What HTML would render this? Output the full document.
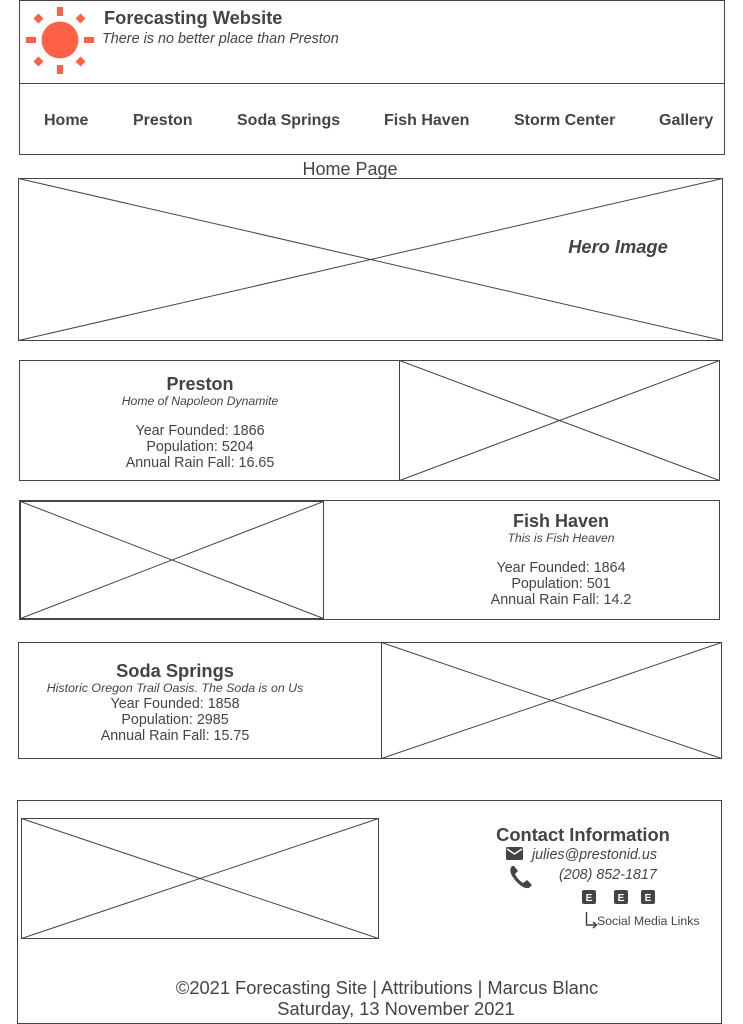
<!DOCTYPE html>
<html><head><meta charset="utf-8"><style>
html,body{margin:0;padding:0;background:#fff;width:743px;height:1024px;overflow:hidden}
svg{display:block}
text{font-family:"Liberation Sans",Arial,sans-serif;fill:#444}
.b{font-weight:bold}
.i{font-style:italic}
</style></head><body>
<svg width="743" height="1024" viewBox="0 0 743 1024" xmlns="http://www.w3.org/2000/svg">
<g fill="none" stroke="#444" stroke-width="1">
<rect x="19.5" y="0.5" width="705" height="154"/>
<line x1="19.5" y1="83.5" x2="724.5" y2="83.5"/>
<rect x="18.5" y="178.5" width="704" height="162"/>
<line x1="18.5" y1="178.5" x2="722.5" y2="340.5"/>
<line x1="18.5" y1="340.5" x2="722.5" y2="178.5"/>
<rect x="19.5" y="360.5" width="700" height="120"/>
<rect x="399.5" y="360.5" width="320" height="120"/>
<line x1="399.5" y1="360.5" x2="719.5" y2="480.5"/>
<line x1="399.5" y1="480.5" x2="719.5" y2="360.5"/>
<rect x="19.5" y="500.5" width="700" height="119"/>
<rect x="20.5" y="501.5" width="303" height="117"/>
<line x1="20.5" y1="501.5" x2="323.5" y2="618.5"/>
<line x1="20.5" y1="618.5" x2="323.5" y2="501.5"/>
<rect x="18.5" y="642.5" width="703" height="116"/>
<rect x="381.5" y="642.5" width="340" height="116"/>
<line x1="381.5" y1="642.5" x2="721.5" y2="758.5"/>
<line x1="381.5" y1="758.5" x2="721.5" y2="642.5"/>
<rect x="17.5" y="800.5" width="704" height="223"/>
<rect x="21.5" y="818.5" width="357" height="120"/>
<line x1="21.5" y1="818.5" x2="378.5" y2="938.5"/>
<line x1="21.5" y1="938.5" x2="378.5" y2="818.5"/>
</g>
<g fill="#fe6146">
<circle cx="60" cy="40" r="18.5"/>
<rect x="57" y="7" width="6" height="9"/>
<rect x="57" y="65" width="6" height="9"/>
<rect x="26" y="37" width="10" height="6"/>
<rect x="84" y="37" width="10" height="6"/>
<rect x="35" y="15" width="7" height="7" transform="rotate(45 38.5 18.5)"/>
<rect x="77" y="15" width="7" height="7" transform="rotate(45 80.5 18.5)"/>
<rect x="35" y="58" width="7" height="7" transform="rotate(45 38.5 61.5)"/>
<rect x="77" y="58" width="7" height="7" transform="rotate(45 80.5 61.5)"/>
</g>
<text x="104" y="24" class="b" font-size="18.3">Forecasting Website</text>
<text x="102" y="43" class="i" font-size="14.4">There is no better place than Preston</text>
<g class="b" font-size="16">
<text x="44" y="125" class="b">Home</text>
<text x="133" y="125" class="b">Preston</text>
<text x="237" y="125" class="b">Soda Springs</text>
<text x="384" y="125" class="b">Fish Haven</text>
<text x="514" y="125" class="b">Storm Center</text>
<text x="659" y="125" class="b">Gallery</text>
</g>
<text x="350" y="175" font-size="18" text-anchor="middle">Home Page</text>
<text x="618" y="253" class="b i" font-size="18.3" text-anchor="middle">Hero Image</text>
<g text-anchor="middle">
<text x="200" y="390" class="b" font-size="18">Preston</text>
<text x="200" y="405" class="i" font-size="12.2">Home of Napoleon Dynamite</text>
<text x="200" y="435" font-size="14.3">Year Founded: 1866</text>
<text x="200" y="451" font-size="14.3">Population: 5204</text>
<text x="200" y="467" font-size="14.3">Annual Rain Fall: 16.65</text>
<text x="561" y="527" class="b" font-size="18">Fish Haven</text>
<text x="561" y="542" class="i" font-size="12.2">This is Fish Heaven</text>
<text x="561" y="572" font-size="14.3">Year Founded: 1864</text>
<text x="561" y="588" font-size="14.3">Population: 501</text>
<text x="561" y="604" font-size="14.3">Annual Rain Fall: 14.2</text>
<text x="175" y="677" class="b" font-size="18.3">Soda Springs</text>
<text x="175" y="692" class="i" font-size="12.4">Historic Oregon Trail Oasis. The Soda is on Us</text>
<text x="175" y="708" font-size="14.3">Year Founded: 1858</text>
<text x="175" y="724" font-size="14.3">Population: 2985</text>
<text x="175" y="740" font-size="14.3">Annual Rain Fall: 15.75</text>
<text x="583" y="841" class="b" font-size="18.3">Contact Information</text>
<text x="387" y="994" font-size="18.3">©2021 Forecasting Site | Attributions | Marcus Blanc</text>
<text x="396" y="1015" font-size="18.3">Saturday, 13 November 2021</text>
</g>
<rect x="506" y="847" width="17" height="13" rx="1.5" fill="#444"/>
<path d="M507 849 L514.5 854 L522 849" stroke="#fff" stroke-width="1.5" fill="none"/>
<text x="532" y="859" class="i" font-size="14.3">julies@prestonid.us</text>
<path d="M512 866 C509 869 510 874 515 880 C521 887 527 890 530 887 L532 885 L527 880 L523 883 C520 881 517 878 515 874 L518 871 L514 866 Z" fill="#444"/>
<text x="559" y="879" class="i" font-size="14.3">(208) 852-1817</text>
<g fill="#444">
<rect x="582" y="890" width="14" height="14" rx="2"/>
<rect x="614" y="890" width="14" height="14" rx="2"/>
<rect x="641" y="890" width="14" height="14" rx="2"/>
</g>
<g font-size="10" class="b" text-anchor="middle">
<text x="589" y="901" style="fill:#fff">E</text>
<text x="621" y="901" style="fill:#fff">E</text>
<text x="648" y="901" style="fill:#fff">E</text>
</g>
<path d="M586.5 912 V925 H596 M593 922 L596.5 925 L593 928" stroke="#444" stroke-width="1.5" fill="none"/>
<text x="597" y="925" font-size="12.3">Social Media Links</text>
</svg>
</body></html>
